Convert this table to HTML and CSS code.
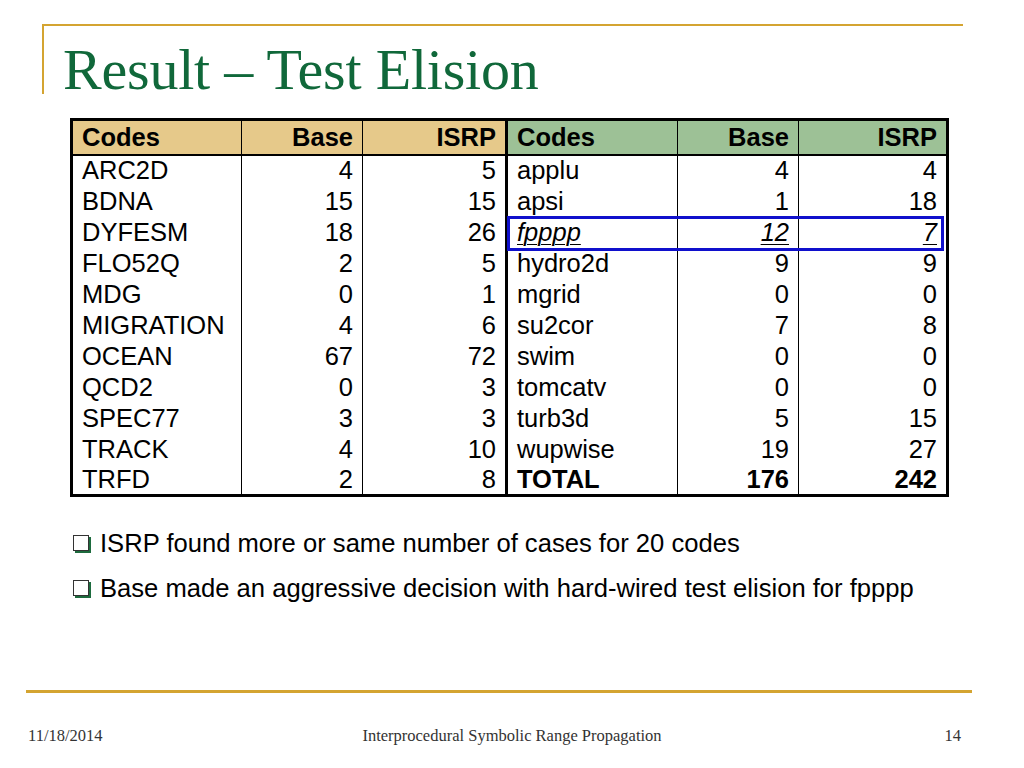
FILE: index.html
```html
<!DOCTYPE html>
<html>
<head>
<meta charset="utf-8">
<link rel="stylesheet" href="styles.css">
</head>
<body>
<div class="slide">
  <header class="title-area">
    <h1 class="title">Result – Test Elision</h1>
  </header>
  <div class="table-wrap">
    <table class="results">
      <thead>
        <tr>
          <th class="c-code tan">Codes</th>
          <th class="c-num tan">Base</th>
          <th class="c-isrp tan split">ISRP</th>
          <th class="c-code2 green">Codes</th>
          <th class="c-num green">Base</th>
          <th class="c-isrp2 green">ISRP</th>
        </tr>
      </thead>
      <tbody>
        <tr><td>ARC2D</td><td class="n">4</td><td class="n split">5</td><td>applu</td><td class="n">4</td><td class="n">4</td></tr>
        <tr><td>BDNA</td><td class="n">15</td><td class="n split">15</td><td>apsi</td><td class="n">1</td><td class="n">18</td></tr>
        <tr><td>DYFESM</td><td class="n">18</td><td class="n split">26</td><td class="em">fpppp</td><td class="n em">12</td><td class="n em">7</td></tr>
        <tr><td>FLO52Q</td><td class="n">2</td><td class="n split">5</td><td>hydro2d</td><td class="n">9</td><td class="n">9</td></tr>
        <tr><td>MDG</td><td class="n">0</td><td class="n split">1</td><td>mgrid</td><td class="n">0</td><td class="n">0</td></tr>
        <tr><td>MIGRATION</td><td class="n">4</td><td class="n split">6</td><td>su2cor</td><td class="n">7</td><td class="n">8</td></tr>
        <tr><td>OCEAN</td><td class="n">67</td><td class="n split">72</td><td>swim</td><td class="n">0</td><td class="n">0</td></tr>
        <tr><td>QCD2</td><td class="n">0</td><td class="n split">3</td><td>tomcatv</td><td class="n">0</td><td class="n">0</td></tr>
        <tr><td>SPEC77</td><td class="n">3</td><td class="n split">3</td><td>turb3d</td><td class="n">5</td><td class="n">15</td></tr>
        <tr><td>TRACK</td><td class="n">4</td><td class="n split">10</td><td>wupwise</td><td class="n">19</td><td class="n">27</td></tr>
        <tr><td>TRFD</td><td class="n">2</td><td class="n split">8</td><td class="b">TOTAL</td><td class="n b">176</td><td class="n b">242</td></tr>
      </tbody>
    </table>
    <div class="highlight"></div>
  </div>
  <ul class="bullets">
    <li><span class="box"></span>ISRP found more or same number of cases for 20 codes</li>
    <li><span class="box"></span>Base made an aggressive decision with hard-wired test elision for fpppp</li>
  </ul>
  <div class="footer-rule"></div>
  <footer class="footer">
    <span class="date">11/18/2014</span>
    <span class="ftitle">Interprocedural Symbolic Range Propagation</span>
    <span class="page">14</span>
  </footer>
</div>
</body>
</html>
```

FILE: styles.css
```css
html, body {
  margin: 0;
  padding: 0;
  background: #ffffff;
}

.slide {
  width: 1024px;
  height: 768px;
  position: relative;
  display: flex;
  flex-direction: column;
  font-family: "Liberation Sans", Arial, sans-serif;
  color: #000;
}

.title-area {
  margin: 24px 61px 0 42px;
  height: 70px;
  border-top: 2px solid #D4A431;
  border-left: 2px solid #D4A431;
  box-sizing: border-box;
}

.title {
  margin: 0;
  padding-left: 19px;
  font-family: "Liberation Serif", "Times New Roman", serif;
  font-weight: normal;
  font-size: 58px;
  line-height: 1;
  color: #10683A;
  margin-top: 15px;
  letter-spacing: -0.2px;
  white-space: nowrap;
}

.table-wrap {
  position: relative;
  margin: 24px 0 0 70px;
  width: 876px;
}

.results {
  border-collapse: collapse;
  border: 3px solid #000;
  width: 876px;
  table-layout: fixed;
  font-size: 25.5px;
}

.results th, .results td {
  box-sizing: border-box;
  padding: 0 9px 0 9px;
  border-left: 1px solid #000;
  border-right: 1px solid #000;
  white-space: nowrap;
  line-height: 1;
}

.results th {
  height: 35px;
  font-weight: bold;
  text-align: right;
  border-bottom: 2px solid #000;
}

.results th.c-code, .results th.c-code2 { text-align: left; }

.results td {
  height: 31px;
  padding-top: 1px;
}

.c-code { width: 170px; }
.c-num { width: 121px; }
.c-isrp { width: 144px; }
.c-code2 { width: 171px; }
.c-isrp2 { width: 149px; }

.tan { background: #E6C98A; }
.green { background: #9DC196; }

.results .split { border-right: 3px solid #000; }

.n { text-align: right; }
.b { font-weight: bold; }
.em { font-style: italic; text-decoration: underline; text-decoration-thickness: 1px; text-underline-offset: 3px; }

.highlight {
  position: absolute;
  left: 437px;
  top: 98px;
  width: 431px;
  height: 29px;
  border: 3px solid #1010CC;
}

.bullets {
  list-style: none;
  margin: 33px 0 0 73px;
  padding: 0;
  font-size: 25.6px;
  color: #000;
}

.bullets li {
  display: flex;
  align-items: center;
  height: 26px;
  margin-bottom: 19px;
  white-space: nowrap;
}

.box {
  width: 14px;
  height: 14px;
  border: 1.5px solid #333;
  box-shadow: 2px 2px 0 #1D6B3E;
  margin-right: 11px;
  flex: none;
  background: #fff;
}

.footer-rule {
  position: absolute;
  left: 26px;
  width: 946px;
  top: 690px;
  height: 3px;
  background: #D4A431;
}

.footer {
  position: absolute;
  left: 0;
  right: 0;
  top: 726px;
  padding: 0 28px;
  display: grid;
  grid-template-columns: 1fr auto 1fr;
  font-family: "Liberation Serif", "Times New Roman", serif;
  font-size: 16.5px;
  color: #333;
}

.date { justify-self: start; }
.ftitle { justify-self: center; }
.page { justify-self: end; margin-right: 35px; }
```
